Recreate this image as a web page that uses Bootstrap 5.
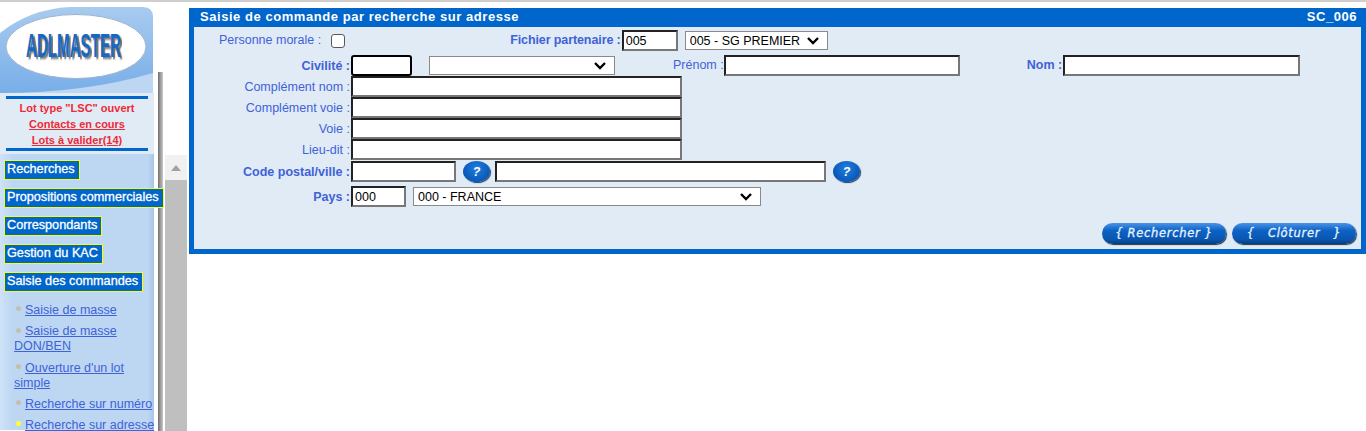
<!DOCTYPE html>
<html lang="fr">
<head>
  <meta charset="UTF-8" />
  <title>Saisie de commande</title>
  <link href="https://cdn.jsdelivr.net/npm/bootstrap@5.3.3/dist/css/bootstrap.min.css" rel="stylesheet" />
  <style>
    html, body { height: 431px; overflow: hidden; }
    body {
      font-family: "Liberation Sans", Arial, sans-serif;
      font-size: 12.5px;
      background: #fff;
      border-top: 2px solid #cfcfcf;
    }
    .page-wrap { height: 429px; }

    /* colonne de gauche */
    .side-col { width: 165px; flex: none; padding-top: 5px; }
    .side-inner { width: 155px; height: 424px; position: relative; }
    .side-inner::after {
      content: ""; position: absolute; left: 158px; top: 65px; bottom: 0; width: 5px;
      background: linear-gradient(to right, #6f6f6f, #c9c9c9);
    }
    .logo-svg { display: block; }
    .statut-box {
      background: #e1ebf6; height: 61px; margin: 0 1px 0 0; padding: 3px 6px 0;
      text-align: center; font-size: 11px; font-weight: 700; color: #ee2a35;
    }
    .statut-box .trait { height: 3px; background: #0066cc; }
    .statut-box a { color: #ee2a35; display: block; line-height: 16px; }
    .statut-box p { line-height: 16px; margin: 0; padding-top: 1px; }
    .menu-zone {
      background: linear-gradient(to right, #cfe2f7, #bdd7f3 8%, #bdd7f3 96%, #a7c5e6);
      height: 276px; padding: 6px 0 0 4px; margin-right: 1px;
    }
    .menu-titre {
      display: table; position: relative; z-index: 1;
      background: #0066cc; color: #fff; border: 1px solid #ffff00;
      font-size: 12.7px; line-height: 17px; padding: 0 4px 1px 2px; margin-bottom: 8px; white-space: nowrap;
      -webkit-text-stroke: .3px #fff;
    }
    .sous-liste { padding: 0 0 0 10px; margin: 11px 0 0; list-style: none; width: 156px; }
    .sous-liste li { line-height: 15px; margin-bottom: 6.3px; }
    .sous-liste a { color: #3f62d8; }
    .puce {
      display: inline-block; width: 5px; height: 5px; border-radius: 50%;
      background: #c3bfb4; margin: 0 4px 4px 2px; vertical-align: middle;
    }
    .puce-on { background: #ffff33; }

    /* ascenseur */
    .ascenseur { width: 22px; flex: none; margin-right: 2px; padding-top: 153px; }
    .asc-haut { height: 25px; background: #f1f1f1; display: flex; align-items: center; justify-content: center; }
    .asc-fleche { width: 0; height: 0; border: 5px solid transparent; border-top: 0; border-bottom: 6px solid #a3a3a3; }
    .asc-barre { height: 251px; background: #bfbfbf; }

    /* panneau principal */
    .panneau { margin-top: 6px; height: 246px; background: #e1ebf6; border: solid #0066cc; border-width: 0 5px 5px 5px; flex-grow: 1; }
    .panneau-titre {
      background: #0066cc; color: #fff; font-weight: 700; font-size: 13px; letter-spacing: .55px;
      height: 19px; line-height: 18px; margin: 0 -5px; padding: 0 9px 0 11px;
    }
    .lignes { padding-top: 3px; }
    .ligne { height: 21px; }
    .ligne-haute { height: 21px; margin-bottom: 4px; }
    .ligne-cp { margin-top: 1px; }
    .etiq { color: #3f62d8; white-space: nowrap; padding-right: 1px; }
    .etiq-gras { font-weight: 700; }
    .col-etiq { width: 157px; text-align: right; flex: none; padding-top: 1px; }
    .saisie {
      border: 2px solid; border-color: #222 #777 #777 #222; border-radius: 0;
      height: 21px; padding: 0 2px; font-family: inherit; font-size: 12.5px; color: #000;
      background: #fff; display: block;
    }
    .saisie-focus { border: 2px solid #000; border-radius: 3px; }
    .choix {
      border: 1px solid #8a8a8a; border-radius: 0; height: 19px; min-height: 0; padding: 0 20px 0 4px;
      font-size: 12.5px; font-family: inherit; color: #000;
      background-image: url("data:image/svg+xml,%3csvg xmlns='http://www.w3.org/2000/svg' viewBox='0 0 14 10'%3e%3cpath fill='none' stroke='%23000' stroke-width='2.4' d='M2 2l5 5 5-5'/%3e%3c/svg%3e");
      background-position: right 7px center; background-size: 14px 10px;
    }
    .aide {
      width: 27px; height: 21px; border-radius: 50%; border: 0; padding: 0; color: #fff; font-weight: 700; font-style: italic; font-size: 12.5px; line-height: 20px;
      background: radial-gradient(ellipse at 50% 35%, #1f7fe0, #0a58b8 70%, #063d82);
      box-shadow: 1px 1px 1px #29415f;
    }
    .bouton-bleu {
      width: 124px; height: 21px; border: 0; border-radius: 11px; padding: 0;
      color: #e8f2ff; font-family: "DejaVu Sans", sans-serif; font-size: 11.5px; font-style: italic; letter-spacing: .7px; white-space: pre;
      -webkit-text-stroke: .3px #e8f2ff;
      background: linear-gradient(to bottom, #4a94e6, #0d63c6 35%, #0a55ae 80%, #073c7a);
      box-shadow: 1px 1px 1px #24354a;
    }
    .zone-boutons { padding: 16px 5px 0 0; gap: 6px; }

    .larg-56 { width: 56px; } .larg-55 { width: 55px; } .larg-61 { width: 61px; } .larg-105 { width: 105px; }
    .larg-143 { width: 143px; } .larg-186 { width: 186px; } .larg-236 { width: 236px; }
    .larg-237 { width: 237px; } .larg-331 { width: 331px; } .larg-348 { width: 348px; }
    .champ-pm { margin-left: 25px; }
    .case-pm { width: 14px; height: 14px; margin-left: 9px !important; border-color: #555; }
    .champ-fp { margin-left: 165px; letter-spacing: -.1px; }
    .ms-fp { margin-left: 7px; }
    .ms-civ { margin-left: 17px; }
    .ms-prenom { margin-left: 58px; padding-right: 0; }
    .ms-nom { margin-left: 67px; }
    .ms-aide1 { margin-left: 7px; }
    .ms-ville { margin-left: 5px; }
    .ms-aide2 { margin-left: 7px; }
    .ms-pays { margin-left: 7px; }
  </style>
</head>
<body>
  <div class="page-wrap d-flex">

    <!-- menu gauche -->
    <div class="side-col">
      <div class="side-inner">
        <svg class="logo-svg" width="154" height="86" viewBox="0 0 154 86">
          <defs>
            <linearGradient id="fond" x1="0" y1="0" x2="0" y2="1">
              <stop offset="0" stop-color="#a9cbef"/>
              <stop offset="1" stop-color="#78aee8"/>
            </linearGradient>
            <filter id="flou"><feGaussianBlur stdDeviation="1"/></filter>
          </defs>
          <path d="M0 26 Q30 2 70 0 H143 Q153 0 153 10 V86 H0 Z" fill="url(#fond)"/>
          <path d="M0 86 Q85 86 153 66 V86 Z" fill="#bdd7f3"/>
          <ellipse cx="76" cy="39.5" rx="70" ry="32" fill="#fff" stroke="#9fb4cc"/>
          <text transform="translate(28 52) scale(.445 1)" filter="url(#flou)" font-family="Liberation Sans" font-weight="700" font-size="34" fill="#777">ADLMASTER</text>
          <text transform="translate(26 50) scale(.445 1)" font-family="Liberation Sans" font-weight="700" font-size="34" fill="#1668c4">ADLMASTER</text>
        </svg>
        <div class="statut-box">
          <div class="trait"></div>
          <p>Lot type "LSC" ouvert</p>
          <a href="#">Contacts en cours</a>
          <a href="#">Lots à valider(14)</a>
          <div class="trait"></div>
        </div>
        <div class="menu-zone">
          <div class="menu-titre">Recherches</div>
          <div class="menu-titre">Propositions commerciales</div>
          <div class="menu-titre">Correspondants</div>
          <div class="menu-titre">Gestion du KAC</div>
          <div class="menu-titre">Saisie des commandes</div>
          <ul class="sous-liste">
            <li><span class="puce"></span><a href="#">Saisie de masse</a></li>
            <li><span class="puce"></span><a href="#">Saisie de masse DON/BEN</a></li>
            <li><span class="puce"></span><a href="#">Ouverture d'un lot simple</a></li>
            <li><span class="puce"></span><a href="#">Recherche sur numéro</a></li>
            <li class="mb-0"><span class="puce puce-on"></span><a href="#">Recherche sur adresse</a></li>
          </ul>
        </div>
      </div>
    </div>

    <div class="ascenseur">
      <div class="asc-haut"><div class="asc-fleche"></div></div>
      <div class="asc-barre"></div>
    </div>

    <!-- formulaire -->
    <div class="panneau">
      <div class="panneau-titre d-flex justify-content-between">
        <span>Saisie de commande par recherche sur adresse</span>
        <span>SC_006</span>
      </div>
      <form class="lignes">
        <div class="ligne-haute d-flex align-items-center">
          <span class="etiq champ-pm">Personne morale :</span>
          <input class="form-check-input m-0 case-pm" type="checkbox" />
          <span class="etiq etiq-gras champ-fp">Fichier partenaire :</span>
          <input class="saisie larg-56" type="text" value="005" />
          <select class="form-select choix larg-143 ms-fp"><option>005 - SG PREMIER</option></select>
        </div>
        <div class="ligne d-flex align-items-center">
          <div class="col-etiq etiq etiq-gras">Civilité :</div>
          <input class="saisie saisie-focus larg-61" type="text" />
          <select class="form-select choix larg-186 ms-civ"><option></option></select>
          <span class="etiq ms-prenom">Prénom :</span>
          <input class="saisie larg-236" type="text" />
          <span class="etiq etiq-gras ms-nom">Nom :</span>
          <input class="saisie larg-237" type="text" />
        </div>
        <div class="ligne d-flex align-items-center"><div class="col-etiq etiq">Complément nom :</div><input class="saisie larg-331" type="text" /></div>
        <div class="ligne d-flex align-items-center"><div class="col-etiq etiq">Complément voie :</div><input class="saisie larg-331" type="text" /></div>
        <div class="ligne d-flex align-items-center"><div class="col-etiq etiq">Voie :</div><input class="saisie larg-331" type="text" /></div>
        <div class="ligne d-flex align-items-center"><div class="col-etiq etiq">Lieu-dit :</div><input class="saisie larg-331" type="text" /></div>
        <div class="ligne ligne-cp d-flex align-items-center">
          <div class="col-etiq etiq etiq-gras">Code postal/ville :</div>
          <input class="saisie larg-105" type="text" />
          <button type="button" class="aide ms-aide1">?</button>
          <input class="saisie larg-331 ms-ville" type="text" />
          <button type="button" class="aide ms-aide2">?</button>
        </div>
        <div class="ligne d-flex align-items-center mt-1">
          <div class="col-etiq etiq etiq-gras">Pays :</div>
          <input class="saisie larg-55" type="text" value="000" />
          <select class="form-select choix larg-348 ms-pays"><option>000 - FRANCE</option></select>
        </div>
        <div class="zone-boutons d-flex justify-content-end">
          <button type="button" class="bouton-bleu">{ Rechercher }</button>
          <button type="button" class="bouton-bleu">{   Clôturer   }</button>
        </div>
      </form>
    </div>
  </div>

  <script src="https://cdn.jsdelivr.net/npm/bootstrap@5.3.3/dist/js/bootstrap.bundle.min.js"></script>
</body>
</html>
